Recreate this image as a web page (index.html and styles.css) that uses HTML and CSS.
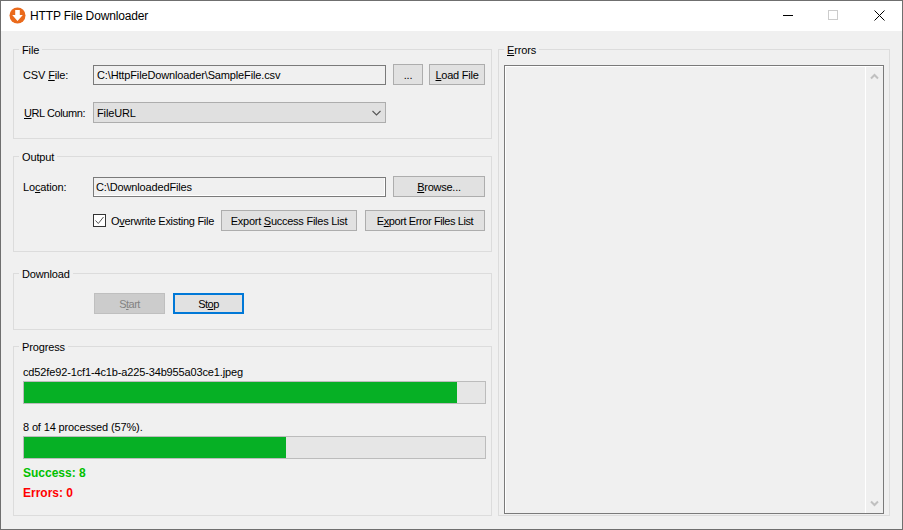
FILE: index.html
```html
<!DOCTYPE html>
<html lang="en">
<head>
<meta charset="utf-8">
<title>HTTP File Downloader</title>
<link rel="stylesheet" href="styles.css">
</head>
<body>
<div class="window">
  <header class="titlebar">
    <svg class="app-icon" width="17" height="17" viewBox="0 0 17 17"><circle cx="8.5" cy="8.5" r="8" fill="#ea6a1c"/><path d="M6.2 3h4.6v5h3L8.5 14 3.200 8h3z" fill="#fff"/></svg>
    <span class="title">HTTP File Downloader</span>
    <div class="controls">
      <svg class="ctl ctl-min" width="11" height="11" viewBox="0 0 11 11"><path d="M0 5.500h10" stroke="#000" fill="none"/></svg>
      <svg class="ctl ctl-max" width="11" height="11" viewBox="0 0 11 11"><rect x=".5" y=".5" width="9" height="9" fill="none" stroke="#ccc"/></svg>
      <svg class="ctl ctl-close" width="11" height="11" viewBox="0 0 11 11"><path d="M.5.500l10 10M10.500.500l-10 10" stroke="#000" fill="none"/></svg>
    </div>
  </header>
  <main class="client">
    <div class="left">
      <fieldset class="group group-file">
        <legend><span>File</span></legend>
        <div class="row">
          <span class="label">CSV <u>F</u>ile:</span>
          <div class="field">C:\HttpFileDownloader\SampleFile.csv</div>
          <button class="btn btn-dots">...</button>
          <button class="btn btn-load"><u>L</u>oad File</button>
        </div>
        <div class="row row-url">
          <span class="label label-url"><u>U</u>RL Column:</span>
          <div class="combo"><span>FileURL</span>
            <svg width="9" height="6" viewBox="0 0 9 6"><path d="M.5 1l4 4 4-4" fill="none" stroke="#555" stroke-width="1.100"/></svg>
          </div>
        </div>
      </fieldset>
      <fieldset class="group group-output">
        <legend><span>Output</span></legend>
        <div class="row">
          <span class="label">Lo<u>c</u>ation:</span>
          <div class="field field-short">C:\DownloadedFiles</div>
          <button class="btn btn-browse"><u>B</u>rowse...</button>
        </div>
        <div class="row row-opts">
          <span class="check"><svg width="13" height="13" viewBox="0 0 13 13"><path d="M2.500 6.500l2.800 3 5.200-6.500" fill="none" stroke="#555" stroke-width="1"/></svg></span>
          <span class="check-text">O<u>v</u>erwrite Existing File</span>
          <button class="btn btn-success">Export <u>S</u>uccess Files List</button>
          <button class="btn btn-error">E<u>x</u>port Error Files List</button>
        </div>
      </fieldset>
      <fieldset class="group group-download">
        <legend><span>Download</span></legend>
        <div class="row row-actions">
          <button class="btn btn-start" disabled>S<u>t</u>art</button>
          <button class="btn btn-stop">St<u>o</u>p</button>
        </div>
      </fieldset>
      <fieldset class="group group-progress">
        <legend><span>Progress</span></legend>
        <div class="status status-file">cd52fe92-1cf1-4c1b-a225-34b955a03ce1.jpeg</div>
        <div class="bar"><div class="fill" style="width:93.9%"></div></div>
        <div class="status status-count">8 of 14 processed (57%).</div>
        <div class="bar"><div class="fill" style="width:56.8%"></div></div>
        <div class="count count-ok">Success: 8</div>
        <div class="count count-err">Errors: 0</div>
      </fieldset>
    </div>
    <fieldset class="group group-errors">
      <legend><span><u>E</u>rrors</span></legend>
      <div class="errors-box">
        <div class="errors-text"></div>
        <div class="scrollbar">
          <svg width="9" height="7" viewBox="0 0 9 7"><path d="M1 5.500l3.500-3.500 3.500 3.500" fill="none" stroke="#c0c0c0" stroke-width="2"/></svg>
          <svg width="9" height="7" viewBox="0 0 9 7"><path d="M1 1.500l3.500 3.500 3.500-3.500" fill="none" stroke="#c0c0c0" stroke-width="2"/></svg>
        </div>
      </div>
    </fieldset>
  </main>
</div>
</body>
</html>
```
FILE: styles.css
```css
* { box-sizing: border-box; }
html, body { margin: 0; padding: 0; }
body {
  width: 903px;
  height: 530px;
  overflow: hidden;
  background: #f0f0f0;
  font-family: "Liberation Sans", Arial, sans-serif;
  font-size: 11px;
  letter-spacing: -.14px;
  color: #000;
}
.window {
  width: 903px;
  height: 530px;
  border: 1px solid #6f6f6f;
  display: flex;
  flex-direction: column;
}
.titlebar {
  height: 30px;
  flex: none;
  background: #fff;
  display: flex;
  align-items: center;
  padding-left: 8px;
}
.app-icon { flex: none; margin-top: -1px; }
.title { margin-left: 4px; font-size: 12px; margin-top: -1px; letter-spacing: -.15px; }
.controls { margin-left: auto; display: flex; align-items: center; margin-top: -1px; }
.ctl { display: block; }
.ctl-min { margin-right: 34px; }
.ctl-max { margin-right: 35px; }
.ctl-close { margin-right: 17px; }

.client {
  flex: 1;
  display: flex;
  gap: 6px;
  padding: 12px 0 0 12px;
}
.left { width: 479px; flex: none; display: flex; flex-direction: column; }

.group {
  margin: 0;
  min-width: 0;
  border: 1px solid #dcdcdc;
  padding: 0 0 0 9px;
}
.group legend {
  margin-left: -4px;
  padding: 0 3px;
  height: 13px;
  line-height: 15px;
}
.group-file { height: 96px; padding-top: 8px; margin-bottom: 11px; }
.group-output { height: 102px; padding-top: 13px; margin-bottom: 15px; }
.group-download { height: 63px; padding-top: 13px; margin-bottom: 10px; }
.group-progress { height: 176px; padding-top: 12px; }
.group-errors {
  width: 392px;
  height: 473px;
  flex: none;
  padding: 9px 5px 0 5px;
}
.group-errors legend { margin-left: 0; }

.row { display: flex; align-items: center; height: 21px; }
.row-url { margin-top: 17px; }
.row-opts { margin-top: 13px; padding-left: 70px; }
.row-actions { padding-left: 71px; }
.label { width: 70px; flex: none; white-space: nowrap; }
.label-url { padding-left: 1px; letter-spacing: -.4px; }

.field {
  width: 293px;
  height: 20px;
  margin-top: 1px;
  flex: none;
  background: #f0f0f0;
  border: 1px solid #7a7a7a;
  line-height: 18px;
  padding-left: 3px;
  white-space: nowrap;
}
.field-short { padding-left: 2px; box-shadow: inset -1px -1px 0 #fff; }
.combo {
  width: 293px;
  height: 21px;
  flex: none;
  background: #e0e0e0;
  border: 1px solid #adadad;
  display: flex;
  align-items: center;
  justify-content: space-between;
  padding: 0 4px 0 3px;
}
.btn {
  font: inherit;
  letter-spacing: -.25px;
  color: #000;
  height: 21px;
  padding: 0;
  flex: none;
  background: #e1e1e1;
  border: 1px solid #adadad;
  border-radius: 0;
  white-space: nowrap;
}
.btn-dots { width: 30px; margin-left: 7px; }
.btn-load { width: 56px; margin-left: 6px; }
.btn-browse { width: 92px; margin-left: 7px; }
.btn-success { width: 136px; margin-left: 7px; }
.btn-error { width: 120px; margin-left: 8px; letter-spacing: -.4px; }
.btn-start { width: 71px; background: #ccc; border-color: #bfbfbf; color: #838383; letter-spacing: -.5px; }
.btn-stop { width: 71px; margin-left: 8px; border: 2px solid #0078d7; letter-spacing: -.5px; }

.check {
  width: 13px;
  height: 13px;
  flex: none;
  border: 1px solid #333;
  background: #fff;
  display: flex;
  align-items: center;
  justify-content: center;
}
.check svg { flex: none; }
.check-text { margin-left: 5px; width: 103px; flex: none; white-space: nowrap; letter-spacing: -.28px; }

.status { height: 16px; line-height: 15px; white-space: nowrap; }
.status-count { margin-top: 16px; }
.bar {
  width: 463px;
  height: 23px;
  background: #e6e6e6;
  border: 1px solid #bcbcbc;
}
.fill { height: 100%; background: #06b025; }
.count { font-size: 12px; letter-spacing: 0; font-weight: bold; height: 15px; line-height: 15px; }
.count-ok { margin-top: 7px; color: #00c000; }
.count-err { margin-top: 5px; color: #ff0000; }

.errors-box {
  width: 380px;
  height: 449px;
  border: 1px solid #7a7a7a;
  display: flex;
  box-shadow: inset 0 1px 0 #fff, inset 1px 0 0 #fff;
}
.errors-text { flex: 1; }
.scrollbar {
  width: 18px;
  flex: none;
  border-left: 1px solid #fff;
  display: flex;
  flex-direction: column;
  justify-content: space-between;
  align-items: center;
  padding: 7px 0 6px;
}
```
